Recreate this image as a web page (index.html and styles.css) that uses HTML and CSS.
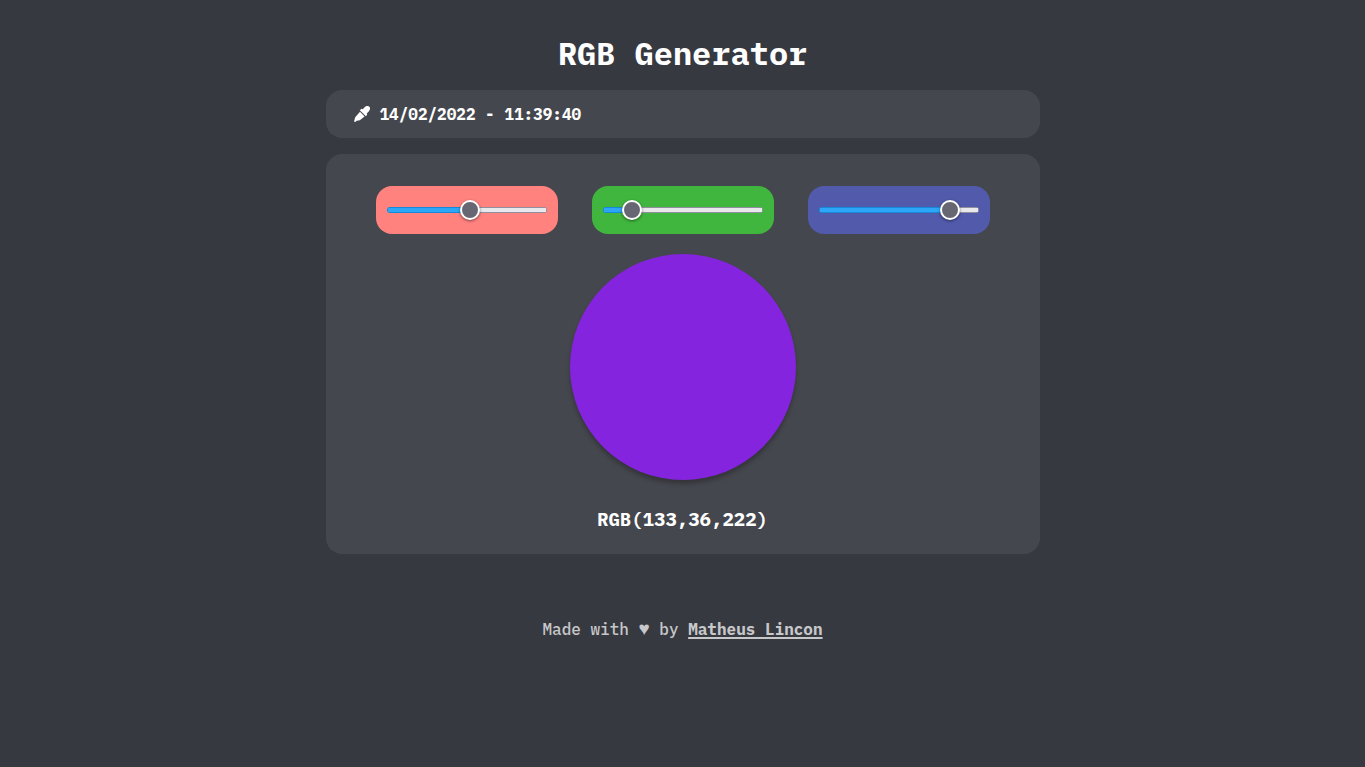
FILE: index.html
```html
<!DOCTYPE html>
<html lang="en">
<head>
<meta charset="utf-8">
<meta name="viewport" content="width=device-width, initial-scale=1">
<title>RGB Generator</title>
<link rel="stylesheet" href="styles.css">
</head>
<body>
<main class="app">
  <h1 class="title">RGB Generator</h1>
  <section class="card stamp">
    <svg class="dropper" viewBox="0 0 16 16" aria-hidden="true"><path d="M0 15.4 1.2 11.2 6 5.8 10.6 10.4 5.8 14.2 2.8 14.8 1.2 16zM5.8 4.2 7.6 2.8 8.8 3.2 10.8 1.1C12.4-.4 14.4-.3 15.3.7 16.4 1.8 16.3 3.7 14.9 5.2L12.8 7.4 13.2 8.6 11.9 10.2z"/></svg>
    <time datetime="2022-02-14T11:39:40">14/02/2022 - 11:39:40</time>
  </section>
  <section class="card mixer">
    <div class="sliders">
      <label class="channel red"><input class="range" type="range" min="0" max="255" value="133" aria-label="Red" style="--value: 133"></label>
      <label class="channel green"><input class="range" type="range" min="0" max="255" value="36" aria-label="Green" style="--value: 36"></label>
      <label class="channel blue"><input class="range" type="range" min="0" max="255" value="222" aria-label="Blue" style="--value: 222"></label>
    </div>
    <div class="swatch"></div>
    <h2 class="code">RGB(133,36,222)</h2>
  </section>
</main>
<footer class="footer">Made with <span class="heart">♥</span> by <a class="author" href="#">Matheus Lincon</a></footer>
</body>
</html>
```
FILE: styles.css
```css
* {
  box-sizing: border-box;
}

body {
  margin: 0;
  padding: 32px 16px;
  min-height: 100vh;
  background: #373941;
  color: #fff;
  font: 16px/24px "IBM Plex Mono", "Liberation Mono", monospace;
}

.app {
  display: flex;
  flex-direction: column;
  gap: 16px;
  max-width: 714px;
  margin: 0 auto;
}

.title {
  margin: 0;
  font-size: 32px;
  line-height: 42px;
  text-align: center;
}

.card {
  background: #45474e;
  border-radius: 16px;
}

.stamp {
  display: flex;
  align-items: center;
  gap: 10px;
  padding: 12px 28px;
  font-weight: 700;
}

.dropper {
  width: 16px;
  height: 16px;
  fill: currentColor;
}

.mixer {
  display: flex;
  flex-direction: column;
  align-items: center;
  padding: 32px 50px 23px;
}

.sliders {
  display: flex;
  flex-wrap: wrap;
  justify-content: center;
  gap: 20px 34px;
}

.channel {
  display: flex;
  align-items: center;
  height: 48px;
  padding: 0 11px;
  border-radius: 16px;
}

.red {
  background: #ff827f;
}

.green {
  background: #40b63e;
}

.blue {
  background: #525aab;
}

.range {
  -webkit-appearance: none;
  appearance: none;
  width: 160px;
  height: 20px;
  margin: 0;
  background: none;
}

.range::-webkit-slider-runnable-track {
  --stop: calc(10px + (100% - 20px) * var(--value) / 255);
  height: 6px;
  border-radius: 3px;
  background:
    linear-gradient(90deg, #2ea6f7 var(--stop), #e9e9ed var(--stop)) 1px 1px / calc(100% - 2px) 4px no-repeat,
    linear-gradient(90deg, #1688d8 var(--stop), #8f8f9d var(--stop));
}

.range::-webkit-slider-thumb {
  -webkit-appearance: none;
  width: 20px;
  height: 20px;
  margin-top: -7px;
  border: 2px solid #fff;
  border-radius: 50%;
  background: #676774;
  box-shadow: 0 1px 3px rgba(0, 0, 0, 0.5);
}

.swatch {
  width: 226px;
  height: 226px;
  margin: 20px 0 27px;
  border-radius: 50%;
  background: rgb(133, 36, 222);
  box-shadow: 0 4px 4px rgba(0, 0, 0, 0.25);
}

.code {
  margin: 0;
  font-size: 19px;
  line-height: 24px;
}

.footer {
  margin-top: 63px;
  color: #c7c8ca;
  font-weight: 500;
  text-align: center;
}

.heart {
  font-family: "Liberation Sans", sans-serif;
  font-size: 19px;
  line-height: 1;
}

.author {
  color: inherit;
  font-weight: 700;
  text-decoration-thickness: 2px;
  text-underline-offset: 2px;
}
```
